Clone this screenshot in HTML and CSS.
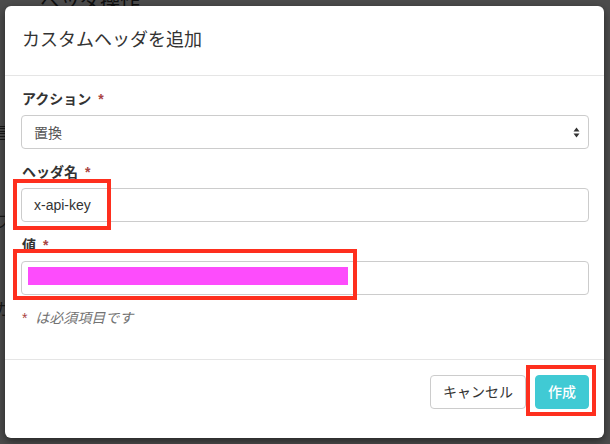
FILE: index.html
```html
<!DOCTYPE html>
<html lang="ja">
<head>
<meta charset="utf-8">
<link rel="stylesheet" href="styles.css">
</head>
<body>
<div class="page">
  <div class="page-head">ヘッダ操作</div>
  <div class="page-side">
    <div class="side-item">言</div>
    <div class="side-item">ワ</div>
    <div class="side-item">カ</div>
  </div>
</div>
<div class="backdrop"></div>
<div class="modal">
  <div class="modal-header">
    <h4 class="modal-title">カスタムヘッダを追加</h4>
  </div>
  <div class="modal-body">
    <div class="form-group">
      <label class="label">アクション <span class="req">*</span></label>
      <div class="control select">
        <span>置換</span>
        <svg class="arrows" width="7" height="11" viewBox="0 0 7 11"><path d="M3.5 0.5 L6.5 4.5 L0.5 4.5 Z M3.5 10.5 L6.5 6.5 L0.5 6.5 Z" fill="#333"/></svg>
      </div>
    </div>
    <div class="form-group">
      <label class="label">ヘッダ名 <span class="req">*</span></label>
      <div class="field">
        <div class="control input">x-api-key</div>
        <div class="mark mark-name"></div>
      </div>
    </div>
    <div class="form-group">
      <label class="label">値 <span class="req">*</span></label>
      <div class="field">
        <div class="control input"><div class="redact"></div></div>
        <div class="mark mark-value"></div>
      </div>
    </div>
    <p class="help"><span class="req">*</span> <em>は必須項目です</em></p>
  </div>
  <div class="modal-footer">
    <button class="btn btn-default">キャンセル</button>
    <div class="field">
      <button class="btn btn-primary">作成</button>
      <div class="mark mark-create"></div>
    </div>
  </div>
</div>
</body>
</html>
```

FILE: styles.css
```css
* { box-sizing: border-box; }
html, body {
  margin: 0;
  padding: 0;
  width: 610px;
  height: 444px;
  overflow: hidden;
}
body {
  font-family: "Liberation Sans", "Noto Sans CJK JP", sans-serif;
  font-size: 14px;
  color: #333;
  background: #fff;
  position: relative;
}
.page {
  position: relative;
  width: 610px;
  height: 444px;
  overflow: hidden;
  background: #fff;
}
.page-head {
  position: absolute;
  left: 40px;
  top: -14px;
  font-size: 20px;
  color: #333;
}
.page-side {
  position: absolute;
  left: -6px;
  top: 120px;
  display: flex;
  flex-direction: column;
  gap: 64px;
  font-size: 16px;
  color: #555;
}
.backdrop {
  position: absolute;
  inset: 0;
  background: rgba(0, 0, 0, 0.7);
}
.modal {
  position: absolute;
  left: 5px;
  top: 6px;
  width: 599px;
  background: #fff;
  border-radius: 6px;
  box-shadow: 0 3px 9px rgba(0, 0, 0, 0.5);
}
.modal-header {
  padding: 22px 17px;
  border-bottom: 1px solid #e5e5e5;
}
.modal-title {
  margin: 0;
  font-size: 18px;
  font-weight: normal;
  line-height: 25px;
  color: #333;
}
.modal-body {
  padding: 13px 15px 31px 16px;
}
.form-group {
  margin-bottom: 13px;
}
.label {
  display: block;
  font-weight: bold;
  font-size: 14px;
  line-height: 20px;
  margin-bottom: 6px;
  padding-left: 1px;
}
.req {
  color: #a94442;
  font-weight: bold;
  margin-left: 3px;
}
.field {
  position: relative;
}
.control {
  height: 34px;
  border: 1px solid #ccc;
  border-radius: 4px;
  padding: 0 12px;
  display: flex;
  align-items: center;
  font-size: 14px;
  background: #fff;
}
.select {
  justify-content: space-between;
  color: #555;
  padding-right: 8px;
}
.input {
  color: #333;
}
.redact {
  position: absolute;
  left: 7px;
  top: 6px;
  width: 320px;
  height: 18px;
  background: #fd4cfc;
}
.mark {
  position: absolute;
  border: 4px solid #fe2f1e;
  pointer-events: none;
}
.mark-name {
  left: -8px;
  top: -9px;
  width: 98px;
  height: 51px;
}
.mark-value {
  left: -8px;
  top: -12px;
  width: 344px;
  height: 51px;
}
.help {
  margin: 0;
  line-height: 20px;
  color: #737373;
  padding-left: 1px;
}
.help .req {
  margin-left: 0;
  margin-right: 4px;
  font-weight: normal;
}
.help em {
  font-style: italic;
}
.modal-footer {
  border-top: 1px solid #e5e5e5;
  padding: 15px 15px 29px;
  display: flex;
  justify-content: flex-end;
  gap: 9px;
}
.btn {
  height: 34px;
  padding: 0 12px;
  border-radius: 4px;
  font-family: inherit;
  font-size: 14px;
  line-height: 20px;
  border: 1px solid transparent;
  display: block;
}
.btn-default {
  background: #fff;
  border-color: #ccc;
  color: #333;
}
.btn-primary {
  background: #40cad4;
  border-color: #40cad4;
  color: #fff;
  font-weight: 500;
}
.mark-create {
  left: -9px;
  top: -10px;
  width: 70px;
  height: 51px;
}
```
